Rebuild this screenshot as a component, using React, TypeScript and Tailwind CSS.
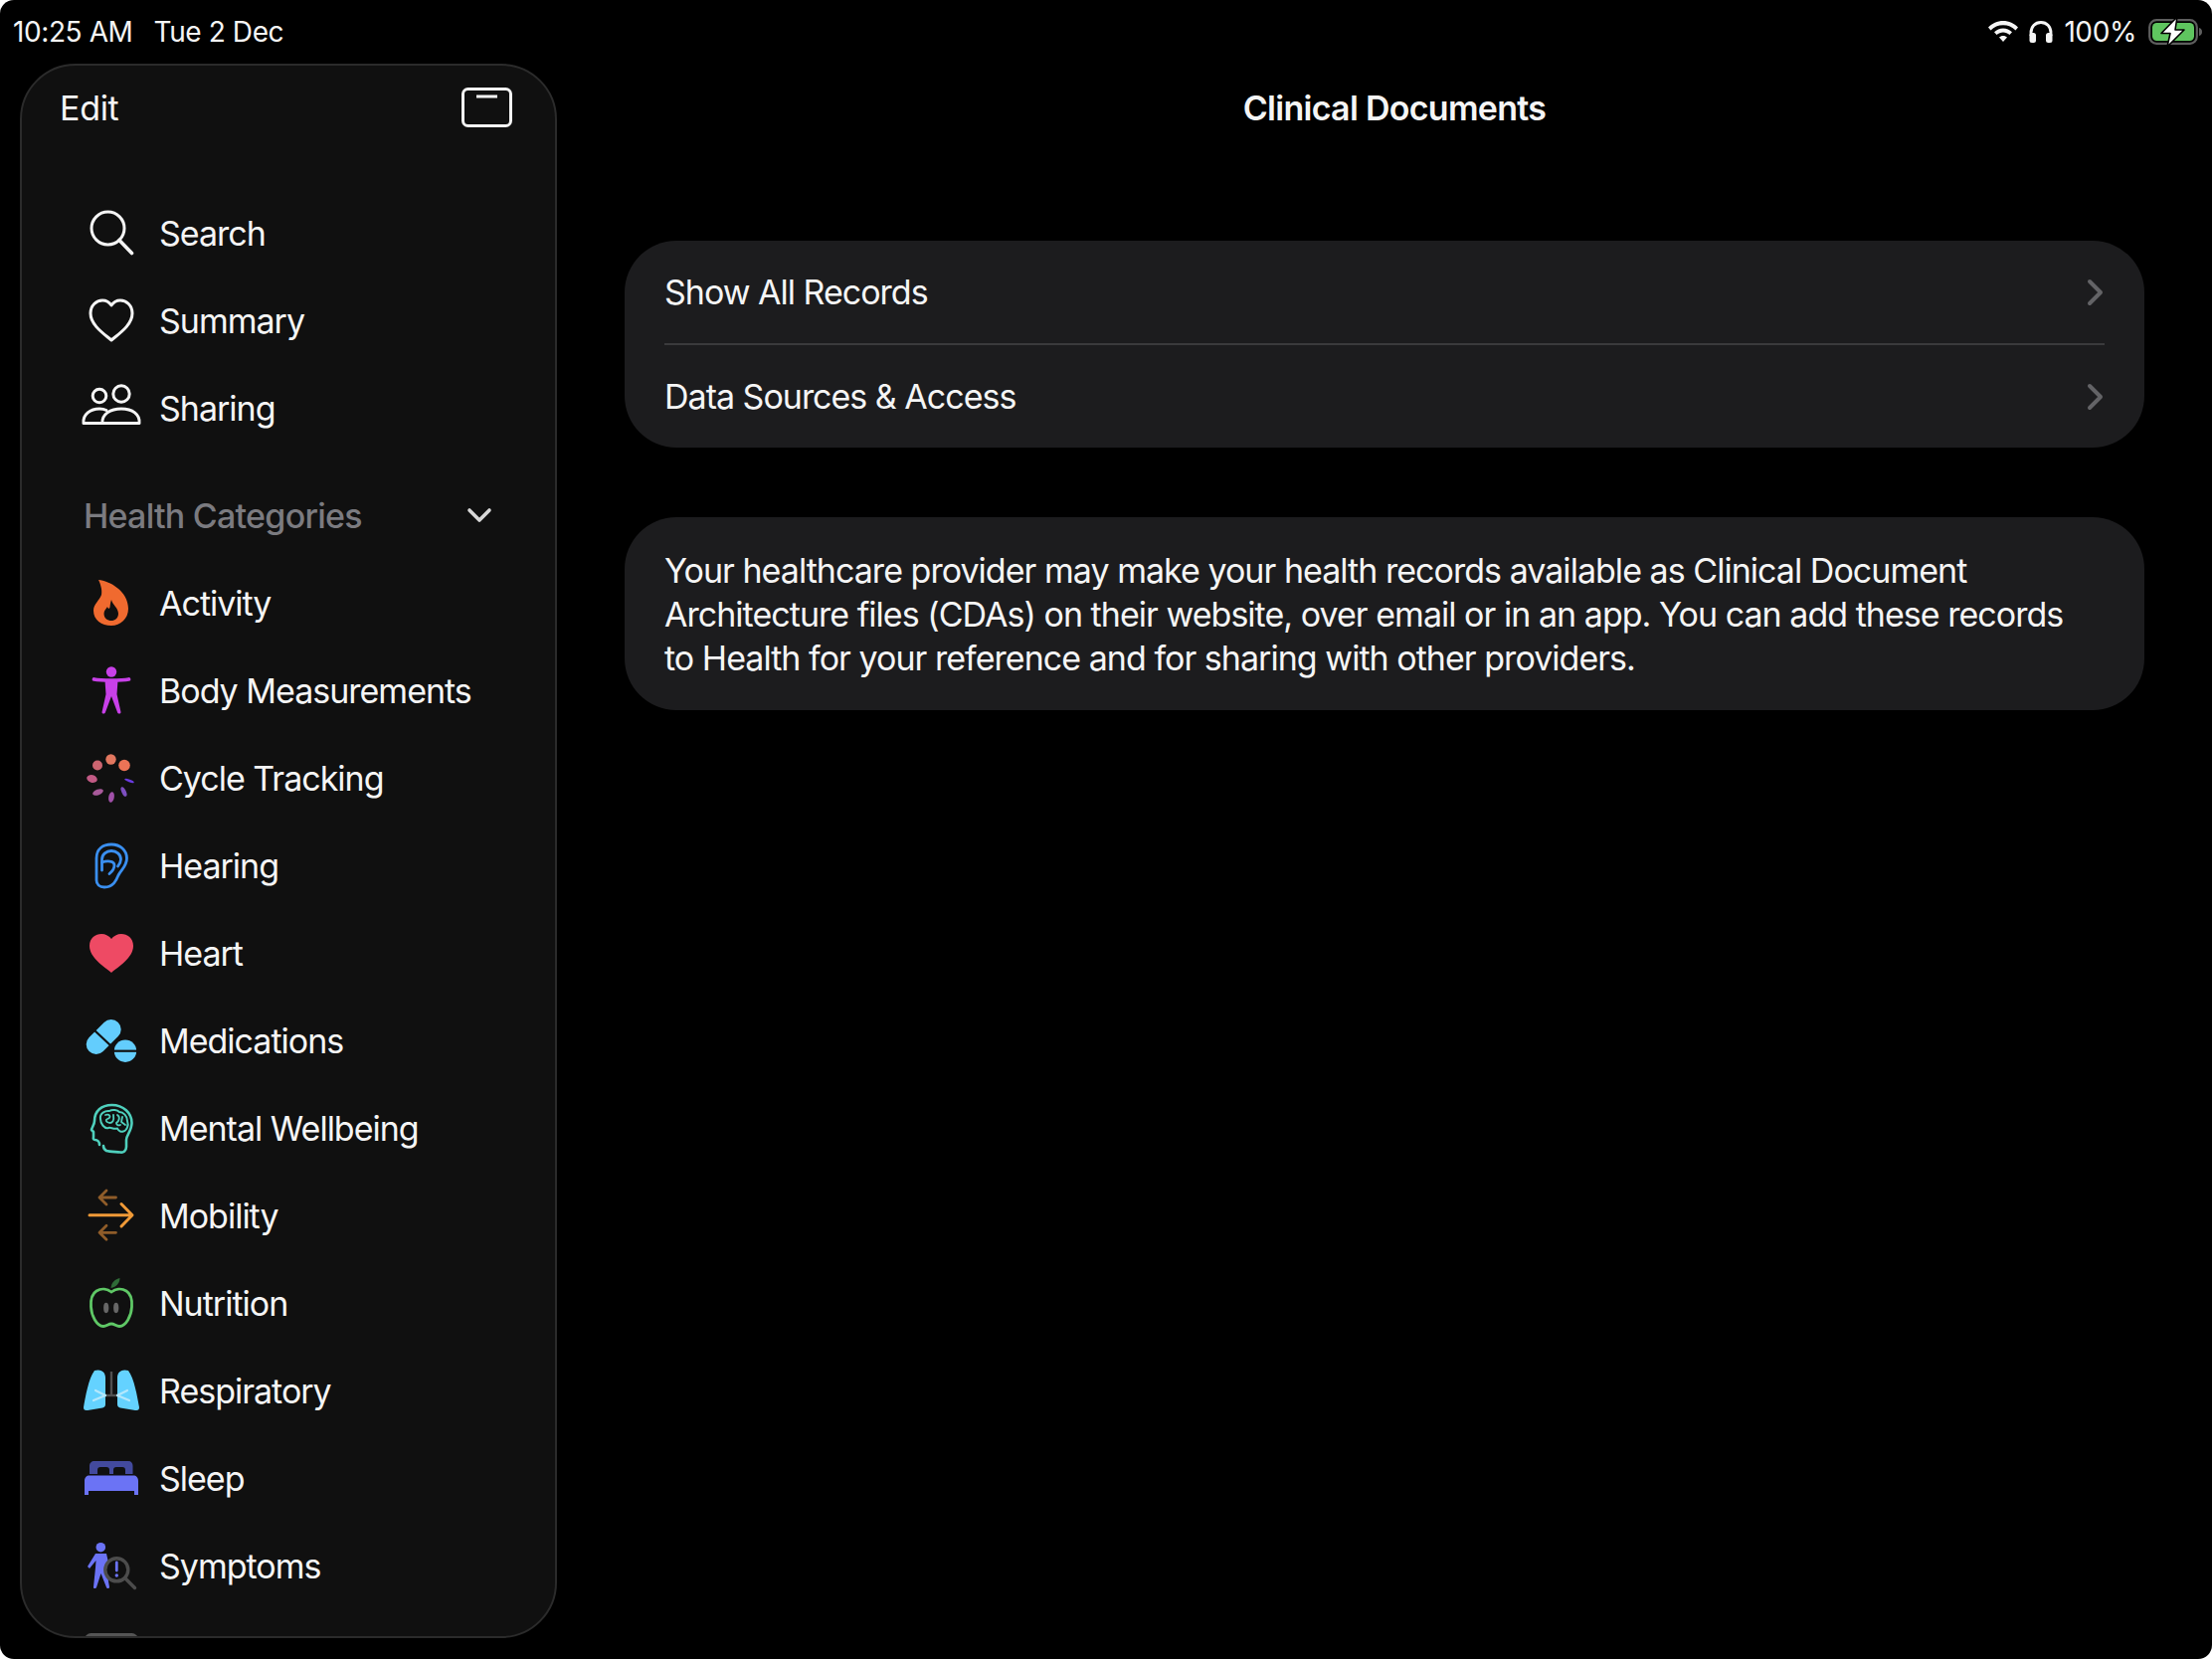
import React from 'react';

const IconBox: React.FC<{ children: React.ReactNode }> = ({ children }) => (
  <svg width="64" height="64" viewBox="0 0 64 64" fill="none" className="shrink-0">
    {children}
  </svg>
);

const SearchIcon = () => (
  <IconBox>
    <circle cx="28.5" cy="27.5" r="16.5" stroke="#f5f5f5" strokeWidth="3" />
    <path d="M40 39.5 L52.5 52.5" stroke="#f5f5f5" strokeWidth="3.6" strokeLinecap="round" />
  </IconBox>
);

const HeartOutline = () => (
  <IconBox>
    <path
      d="M32 52 C25 46 11 37 11 25 C11 17 17 12 23 12 C27 12 30 14 32 17 C34 14 37 12 41 12 C47 12 53 17 53 25 C53 37 39 46 32 52Z"
      stroke="#f5f5f5"
      strokeWidth="3"
      strokeLinejoin="round"
    />
  </IconBox>
);

const PeopleIcon = () => (
  <IconBox>
    <circle cx="20" cy="20" r="6.8" stroke="#f5f5f5" strokeWidth="3" />
    <circle cx="42" cy="18" r="8.2" stroke="#f5f5f5" strokeWidth="3" />
    <path d="M23 47.5 H4 C3 38.5 11 33 20 33 C23 33 25 33.5 27 34.5" stroke="#f5f5f5" strokeWidth="3" strokeLinecap="round" strokeLinejoin="round" />
    <path d="M23 47.5 C22 38.5 31 33 42 33 C53 33 61 38.5 60 47.5 Z" stroke="#f5f5f5" strokeWidth="3" strokeLinejoin="round" />
  </IconBox>
);

const FlameIcon = () => (
  <IconBox>
    <path d="M19 9 C30 10 49 20 49 38 C49 48 41 55 32 55 C22 55 14 49 14 40 C14 33 20 30 22 24 C23 19 21 13 19 9Z" fill="#f06a2f" />
    <path d="M32 29 C33 34 39 37 39 43 C39 47.5 35.5 50 32 50 C28 50 24.5 47.5 24.5 43 C24.5 40 26.5 38.5 28 36 C28.5 38 30 38.5 30.5 36.5 C30.8 34 31 32 32 29Z" fill="#101010" />
  </IconBox>
);

const BodyIcon = () => (
  <IconBox>
    <circle cx="32" cy="13.5" r="5.2" fill="#c840e8" />
    <path d="M14.5 21 C22 22.5 42 22.5 49.5 21" stroke="#c840e8" strokeWidth="3.8" strokeLinecap="round" />
    <path d="M25.5 22 H38.5 L37.5 36 L41.5 54 C41.5 56 38.5 56 38 54 L32 38 L26 54 C25.5 56 22.5 56 22.5 54 L26.5 36Z" fill="#c840e8" />
  </IconBox>
);

const CycleIcon = () => (
  <IconBox>
    <circle cx="31.5" cy="13.5" r="5.2" fill="#e2775f" />
    <circle cx="45" cy="19.5" r="5.8" fill="#ec7356" />
    <ellipse cx="18" cy="19.5" rx="5" ry="5" fill="#cc6570" />
    <ellipse cx="12.5" cy="33" rx="5.4" ry="3.8" fill="#c25a85" transform="rotate(15 12.5 33)" />
    <ellipse cx="18.5" cy="46.5" rx="5.6" ry="2.8" fill="#a85a9a" transform="rotate(-20 18.5 46.5)" />
    <ellipse cx="32" cy="51.5" rx="2.8" ry="5.4" fill="#a050a8" transform="rotate(10 32 51.5)" />
    <ellipse cx="44.5" cy="46" rx="2.2" ry="5.2" fill="#7d4fc0" transform="rotate(-25 44.5 46)" />
    <ellipse cx="50" cy="35" rx="5" ry="1.3" fill="#6a3be0" transform="rotate(20 50 35)" />
  </IconBox>
);

const EarIcon = () => (
  <IconBox>
    <path d="M17 25 C17 15 24 11 32 11 C41 11 47.5 17 47.5 25 C47.5 33 42 36 39 42 C37 47 34 54 25 54 C20 54 17 51 17 47 Z" stroke="#3a8ff0" strokeWidth="2.8" strokeLinejoin="round" />
    <path d="M22.5 37 V26 C22.5 21 27 17.5 32 17.5 C37 17.5 41.5 21 41.5 26 C41.5 29 40 31 38.5 33" stroke="#3a8ff0" strokeWidth="2.8" strokeLinecap="round" />
    <path d="M22.5 29 C27 27.5 35 27 35 32 C35 36 33 38 30 40.5" stroke="#3a8ff0" strokeWidth="2.8" strokeLinecap="round" />
  </IconBox>
);

const HeartFilled = () => (
  <IconBox>
    <path d="M32 52 C25 46 10 37 10 25 C10 17 16 13 22 13 C26 13 30 15 32 18 C34 15 38 13 42 13 C48 13 54 17 54 25 C54 37 39 46 32 52Z" fill="#ee4a64" />
  </IconBox>
);

const PillsIcon = () => (
  <IconBox>
    <path d="M16.7 36 L31.7 21" stroke="#63cdfd" strokeWidth="20" strokeLinecap="round" />
    <path d="M14 21 L31 37" stroke="#101010" strokeWidth="2.2" />
    <circle cx="46" cy="42.7" r="11.2" fill="#63cdfd" />
    <path d="M34 42.7 H58" stroke="#101010" strokeWidth="2.2" />
  </IconBox>
);

const BrainHeadIcon = () => (
  <IconBox>
    <path d="M20 49 C20 46 18 44 15.5 44 C14 44 13.5 43 14 41 L14 36 L12 34 C12 32 15 29 15 25 C15 15 22 9 32.5 9 C44 9 52.5 17 52.5 27 C52.5 35 47 39 47 44 V51 C47 55 44 57 41 56.5 C36 56 30 56 27 55 C25 54 24 52 24 50" stroke="#4fd0bd" strokeWidth="2.6" strokeLinejoin="round" strokeLinecap="round" />
    <path d="M21 23 C20 17 26 14.5 30 15 C33 13 38 14 40 16 C44 16 48 20 48 25 C50 30 47 35 44 35.5 C42 36.5 39 35 38 32.5 C34 33.5 31 31 29 32 C25 33 21 28 21 23Z" stroke="#4fd0bd" strokeWidth="2" strokeLinejoin="round" />
    <path d="M26 19 C31 17.5 32 22 28 23 C26 24 26 26 30 27 C33 27 35 25 34 19 M38 19 C41 21 40 25 37 27 C37 29 39 30 41 29 M43 21 L42 26 L46 29" stroke="#4fd0bd" strokeWidth="1.8" strokeLinecap="round" strokeLinejoin="round" />
  </IconBox>
);

const MobilityIcon = () => (
  <IconBox>
    <path d="M10 31.7 H52 M42 20.5 L53 31.7 L42 43" stroke="#f09a37" strokeWidth="3" strokeLinecap="round" strokeLinejoin="round" />
    <path d="M36.5 14 H20 M27 7 L20 14 L27 21" stroke="#8f5c29" strokeWidth="2.8" strokeLinecap="round" strokeLinejoin="round" />
    <path d="M36.5 49.3 H20 M27 42.3 L20 49.3 L27 56.3" stroke="#8f5c29" strokeWidth="2.8" strokeLinecap="round" strokeLinejoin="round" />
  </IconBox>
);

const AppleIcon = () => (
  <IconBox>
    <path d="M32 21 C28 18 22 17 17 20 C12 23 11 29 11.5 36 C12 45 17 55 24 55.5 C27 55.5 29 53 32 53 C35 53 37 55.5 40 55.5 C47 55 52 45 52.5 36 C53 29 52 23 47 20 C42 17 36 18 32 21Z" stroke="#5fc866" strokeWidth="2.8" />
    <path d="M31.5 17 C32 11 36 8 40.5 7 C40.5 12 37 16 31.5 17Z" fill="#2f6b37" />
    <ellipse cx="26.7" cy="37" rx="2.6" ry="5.2" fill="#666" />
    <ellipse cx="36.7" cy="37" rx="2.6" ry="5.2" fill="#666" />
  </IconBox>
);

const LungsIcon = () => (
  <IconBox>
    <path d="M15 12 C21 10 26 13 26 19 V46 C26 48 25 49 23 49.5 L8 52 C5 52.5 4 51 4 49 C6 38 9 20 15 12Z" fill="#64d2ff" />
    <path d="M49 12 C43 10 38 13 38 19 V46 C38 48 39 49 41 49.5 L56 52 C59 52.5 60 51 60 49 C58 38 55 20 49 12Z" fill="#64d2ff" />
    <path d="M32 13 V36" stroke="#505050" strokeWidth="2.4" />
    <path d="M26 37 H38" stroke="#505050" strokeWidth="2.4" />
    <path d="M26 37 L14 42 M26 37 L16 32 M38 37 L50 42 M38 37 L48 32" stroke="#b4e8fc" strokeWidth="2.2" strokeLinecap="round" />
  </IconBox>
);

const BedIcon = () => (
  <IconBox>
    <path d="M10 28 V20 C10 17 12 15 15 15 H49 C52 15 53.5 17 53.5 20 V28 H46 V24 C46 22 45 21 43 21 H37 C35 21 34 22 34 24 V28 H30 V24 C30 22 29 21 27 21 H21 C19 21 18 22 18 24 V28Z" fill="#434a9e" />
    <path d="M5 35 C5 31.5 7 29.5 10 29.5 H54 C57 29.5 59 31.5 59 35 V49 H55 V45 H9 V49 H5Z" fill="#6b73f5" />
  </IconBox>
);

const SymptomsIcon = () => (
  <IconBox>
    <circle cx="21.3" cy="13.7" r="4.8" fill="#6b73f5" />
    <path d="M16 20 H27 L29 29 L27 36 L30 53.5 C30 55.5 27.5 55.5 27 54 L21.5 40 L17 54 C16.5 55.5 13.5 55.5 14 53.5 L16 34 L16.5 27 L10 35 L8 33Z" fill="#6b73f5" />
    <circle cx="37.3" cy="36.3" r="11.5" fill="#101010" stroke="#4c4c4c" strokeWidth="3.4" />
    <path d="M45.5 44.5 L55.5 54.5" stroke="#4c4c4c" strokeWidth="3.4" strokeLinecap="round" />
    <path d="M37.3 29 V37" stroke="#6b73f5" strokeWidth="2.8" strokeLinecap="round" />
    <circle cx="37.3" cy="42" r="1.7" fill="#6b73f5" />
  </IconBox>
);

const OtherIcon = () => (
  <IconBox>
    <rect x="6.5" y="13.5" width="51" height="40" rx="5" stroke="#555" strokeWidth="3" />
  </IconBox>
);

const topItems = [
  { label: 'Search', icon: <SearchIcon /> },
  { label: 'Summary', icon: <HeartOutline /> },
  { label: 'Sharing', icon: <PeopleIcon /> },
];

const categories = [
  { label: 'Activity', icon: <FlameIcon /> },
  { label: 'Body Measurements', icon: <BodyIcon /> },
  { label: 'Cycle Tracking', icon: <CycleIcon /> },
  { label: 'Hearing', icon: <EarIcon /> },
  { label: 'Heart', icon: <HeartFilled /> },
  { label: 'Medications', icon: <PillsIcon /> },
  { label: 'Mental Wellbeing', icon: <BrainHeadIcon /> },
  { label: 'Mobility', icon: <MobilityIcon /> },
  { label: 'Nutrition', icon: <AppleIcon /> },
  { label: 'Respiratory', icon: <LungsIcon /> },
  { label: 'Sleep', icon: <BedIcon /> },
  { label: 'Symptoms', icon: <SymptomsIcon /> },
  { label: '', icon: <OtherIcon /> },
];

const NavRow: React.FC<{ label: string; icon: React.ReactNode }> = ({ label, icon }) => (
  <div className="flex h-[88px] shrink-0 items-center gap-4 pl-[58px]">
    {icon}
    <span className="text-[34px] tracking-[-1px] text-[#f5f5f5]">{label}</span>
  </div>
);

const Chevron = () => (
  <svg width="18" height="28" viewBox="0 0 18 28" fill="none">
    <path d="M3 3 L14 14 L3 25" stroke="#636366" strokeWidth="4" strokeLinecap="round" strokeLinejoin="round" />
  </svg>
);

const RecordRow: React.FC<{ label: string }> = ({ label }) => (
  <div className="flex h-[103px] items-center justify-between">
    <span className="text-[34px] tracking-[-1px] text-[#f5f5f5]">{label}</span>
    <Chevron />
  </div>
);

export default function App() {
  return (
    <div className="h-[1668px] w-[2224px] overflow-hidden bg-white font-['Inter',sans-serif]">
      <div className="flex h-full flex-col overflow-hidden rounded-[14px] bg-black">
        <div className="flex h-[64px] shrink-0 items-center justify-between pl-[13px] pr-[10px] text-[28px] tracking-[-0.4px] text-[#f5f5f5]">
          <div className="flex gap-[21px]">
            <span>10:25 AM</span>
            <span>Tue 2 Dec</span>
          </div>
          <div className="flex items-center gap-[11px]">
            <svg width="30" height="22" viewBox="0 0 30 22" fill="#f5f5f5">
              <path d="M15 0 C21 0 26 2.5 30 6.5 L27.5 9.5 C24 6 20 4.2 15 4.2 C10 4.2 6 6 2.5 9.5 L0 6.5 C4 2.5 9 0 15 0Z" />
              <path d="M15 7.5 C18.5 7.5 21.5 9 24 11.3 L21.5 14 C19.5 12.4 17.5 11.5 15 11.5 C12.5 11.5 10.5 12.4 8.5 14 L6 11.3 C8.5 9 11.5 7.5 15 7.5Z" />
              <path d="M15 15 C16.7 15 18 15.6 19 16.6 L15 21 L11 16.6 C12 15.6 13.3 15 15 15Z" />
            </svg>
            <svg width="24" height="22" viewBox="0 0 24 22" fill="none">
              <path d="M2 15 V12 C2 6 6 1.5 12 1.5 C18 1.5 22 6 22 12 V15" stroke="#f5f5f5" strokeWidth="2.8" />
              <rect x="0.5" y="12" width="6.5" height="10" rx="2.5" fill="#f5f5f5" />
              <rect x="17" y="12" width="6.5" height="10" rx="2.5" fill="#f5f5f5" />
            </svg>
            <span>100%</span>
            <svg width="54" height="26" viewBox="0 0 54 26" fill="none" className="ml-[1px] overflow-visible">
              <rect x="1.2" y="1.2" width="47.6" height="23.6" rx="7" stroke="#5e5e5e" strokeWidth="2.2" />
              <rect x="4" y="4" width="42" height="18" rx="4.5" fill="#5fc55f" />
              <path d="M51 9 C53 9.5 54 11 54 13 C54 15 53 16.5 51 17Z" fill="#5e5e5e" />
              <path d="M29 -2 L13 14.5 H22 L19 28 L36 11 H27Z" fill="#ffffff" stroke="#000" strokeWidth="1.6" strokeLinejoin="round" />
            </svg>
          </div>
        </div>

        <div className="flex flex-1 overflow-hidden">
          <aside className="ml-[20px] flex h-[1583px] w-[540px] shrink-0 flex-col overflow-hidden rounded-[56px] border-2 border-[#2b2b2b] bg-[#101010]">
            <div className="flex h-[84px] shrink-0 items-center justify-between pl-[38px] pr-[43px]">
              <span className="text-[34px] tracking-[-0.3px] text-[#f5f5f5]">Edit</span>
              <svg width="51" height="40" viewBox="0 0 51 40" fill="none">
                <rect x="1.5" y="1.5" width="48" height="37" rx="5" stroke="#f5f5f5" strokeWidth="3" />
                <path d="M15 9 H36" stroke="#f5f5f5" strokeWidth="3" />
              </svg>
            </div>
            <div className="mt-[40px] flex flex-col">
              {topItems.map((item) => (
                <NavRow key={item.label} label={item.label} icon={item.icon} />
              ))}
            </div>
            <div className="mt-[20px] flex h-[88px] shrink-0 items-center justify-between pl-[62px] pr-[63px]">
              <span className="text-[34px] font-medium tracking-[-0.75px] text-[#7b7b80]">Health Categories</span>
              <svg width="26" height="16" viewBox="0 0 26 16" fill="none">
                <path d="M3 3 L13 13 L23 3" stroke="#d8d8d8" strokeWidth="3.6" strokeLinecap="round" strokeLinejoin="round" />
              </svg>
            </div>
            <div className="flex flex-col">
              {categories.map((item) => (
                <NavRow key={item.label || 'other'} label={item.label} icon={item.icon} />
              ))}
            </div>
          </aside>

          <main className="flex-1 px-[68px]">
            <div className="flex h-[88px] items-center justify-center pl-[20px] text-[34px] font-semibold tracking-[-0.72px] text-[#f5f5f5]">
              Clinical Documents
            </div>
            <div className="mt-[90px] rounded-[52px] bg-[#1c1c1e] pl-[40px] pr-[40px]">
              <RecordRow label="Show All Records" />
              <div className="h-[2px] bg-[#3a3a3c]" />
              <RecordRow label="Data Sources & Access" />
            </div>
            <div className="mt-[70px] rounded-[52px] bg-[#1c1c1e] px-[40px] pb-[30px] pt-[32px] text-[34px] leading-[44px] tracking-[-0.97px] text-[#f5f5f5]">
              Your healthcare provider may make your health records available as Clinical Document
              <br />
              Architecture files (CDAs) on their website, over email or in an app. You can add these records
              <br />
              to Health for your reference and for sharing with other providers.
            </div>
          </main>
        </div>
      </div>
    </div>
  );
}
